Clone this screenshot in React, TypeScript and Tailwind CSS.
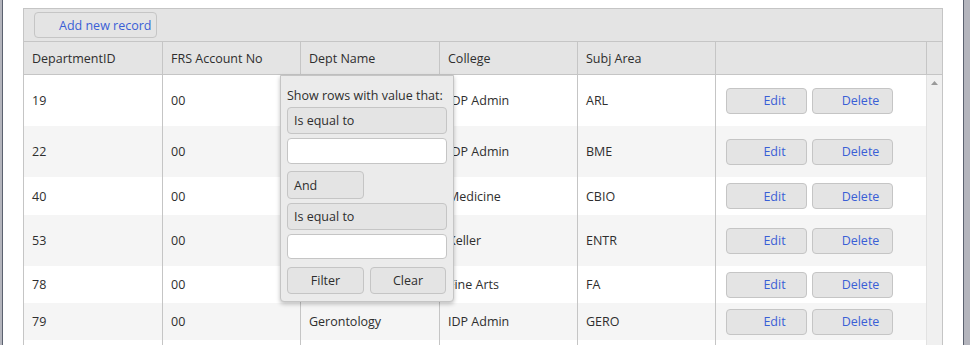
import React from "react"

const cols = [
  { label: "DepartmentID", w: "w-[138px]" },
  { label: "FRS Account No", w: "w-[138px]" },
  { label: "Dept Name", w: "w-[139px]" },
  { label: "College", w: "w-[138px]" },
  { label: "Subj Area", w: "w-[138px]" },
]

// dept names of the first rows sit under the filter menu, so they are left blank
const rows = [
  { id: "19", frs: "00", dept: "", college: "IDP Admin", subj: "ARL", h: "h-[51px]" },
  { id: "22", frs: "00", dept: "", college: "IDP Admin", subj: "BME", h: "h-[51px]" },
  { id: "40", frs: "00", dept: "", college: "Medicine", subj: "CBIO", h: "h-[38px]" },
  { id: "53", frs: "00", dept: "", college: "Keller", subj: "ENTR", h: "h-[51px]" },
  { id: "78", frs: "00", dept: "", college: "Fine Arts", subj: "FA", h: "h-[37px]" },
  { id: "79", frs: "00", dept: "Gerontology", college: "IDP Admin", subj: "GERO", h: "h-[37px]" },
]

function Btn({ label, className }: { label: string; className?: string }) {
  // blank space on the left is where the (missing) icon sits
  return (
    <button
      className={
        "h-[26px] rounded-[4px] border border-[#c5c5c5] bg-[#e4e4e4] pl-[16px] pt-[2px] text-[#3a5fd6] " +
        (className ?? "")
      }
    >
      {label}
    </button>
  )
}

function FilterMenu() {
  return (
    <div className="absolute left-[256px] top-[66px] flex h-[227px] w-[174px] flex-col rounded-b-[4px] border border-[#c5c5c5] bg-[#ebebeb] px-[6px] shadow-[0_2px_4px_rgba(0,0,0,0.25)]">
      <div className="mt-[11px] h-[18px] leading-[18px] text-[#2e2e2e]">Show rows with value that:</div>
      <div className="mt-[2px] flex h-[27px] items-center rounded-[4px] border border-[#c5c5c5] bg-[#e4e4e4] px-[6px] pt-[2px]">
        Is equal to
      </div>
      <div className="mt-[4px] h-[26px] rounded-[4px] border border-[#c5c5c5] bg-white" />
      <div className="mt-[7px] flex h-[28px] w-[77px] items-center rounded-[4px] border border-[#c5c5c5] bg-[#e4e4e4] px-[6px] pt-[2px]">
        And
      </div>
      <div className="mt-[4px] flex h-[27px] items-center rounded-[4px] border border-[#c5c5c5] bg-[#e4e4e4] px-[6px] pt-[2px]">
        Is equal to
      </div>
      <div className="mt-[4px] h-[25px] rounded-[4px] border border-[#c5c5c5] bg-white" />
      <div className="mt-[8px] flex gap-[6px]">
        <button className="h-[27px] w-[77px] rounded-[4px] border border-[#c5c5c5] bg-[#e4e4e4] pt-[2px]">Filter</button>
        <button className="h-[27px] w-[76px] rounded-[4px] border border-[#c5c5c5] bg-[#e4e4e4] pt-[2px]">Clear</button>
      </div>
    </div>
  )
}

export default function App() {
  return (
    <div className="flex h-[345px] w-[970px] overflow-hidden bg-white font-['Open_Sans',sans-serif] text-[12.5px] text-[#2e2e2e]">
      <div className="w-[2px] bg-[#b4b5bd]" />
      <div className="w-[1px] bg-[#5c6270]" />

      <div className="flex-1 pl-[20px] pt-[8px]">
        <div className="relative h-[400px] w-[920px] border border-[#c5c5c5]">
          {/* toolbar */}
          <div className="h-[33px] border-b border-[#c5c5c5] bg-[#e4e4e4] pl-[10px] pt-[3px]">
            <Btn label="Add new record" className="w-[123px] pl-[24px] text-left" />
          </div>

          {/* header */}
          <div className="flex h-[33px] border-b border-[#c5c5c5] bg-[#e4e4e4]">
            {cols.map((c, i) => (
              <div
                key={c.label}
                className={`${c.w} flex items-center pl-[8px] pt-[3px] ${i > 0 ? "border-l border-[#c5c5c5]" : ""}`}
              >
                {c.label}
              </div>
            ))}
            <div className="w-[211px] border-l border-[#c5c5c5]" />
            <div className="w-[16px] border-l border-[#c5c5c5]" />
          </div>

          {/* body */}
          <div className="flex">
            <div className="flex-1">
              {rows.map((r, i) => (
                <div key={r.id} className={`flex ${r.h} ${i % 2 ? "bg-[#f5f5f5]" : "bg-white"}`}>
                  <div className="flex w-[138px] items-center pl-[8px] pt-[2px]">{r.id}</div>
                  <div className="flex w-[138px] items-center border-l border-[#c5c5c5] pl-[8px] pt-[2px]">{r.frs}</div>
                  <div className="flex w-[139px] items-center border-l border-[#c5c5c5] pl-[8px] pt-[2px]">{r.dept}</div>
                  <div className="flex w-[138px] items-center border-l border-[#c5c5c5] pl-[8px] pt-[2px]">{r.college}</div>
                  <div className="flex w-[138px] items-center border-l border-[#c5c5c5] pl-[8px] pt-[2px]">{r.subj}</div>
                  <div className="flex w-[211px] items-center gap-[5px] border-l border-[#c5c5c5] pl-[10px]">
                    <Btn label="Edit" className="w-[81px]" />
                    <Btn label="Delete" className="w-[81px]" />
                  </div>
                </div>
              ))}
              {/* start of the next row, scrolled out of view */}
              <div className="flex h-[40px] bg-white">
                <div className="w-[138px]" />
                <div className="w-[138px] border-l border-[#c5c5c5]" />
                <div className="w-[139px] border-l border-[#c5c5c5]" />
                <div className="w-[138px] border-l border-[#c5c5c5]" />
                <div className="w-[138px] border-l border-[#c5c5c5]" />
                <div className="w-[211px] border-l border-[#c5c5c5]" />
              </div>
            </div>
            <div className="flex h-[300px] w-[16px] justify-center border-l border-[#e2e2e2] bg-[#f0f0f0] pt-[6px]">
              <svg width="7" height="4" viewBox="0 0 7 4">
                <path d="M0 4 L3.5 0 L7 4 Z" fill="#9a9a9a" />
              </svg>
            </div>
          </div>

          <FilterMenu />
        </div>
      </div>

      <div className="w-[1px] bg-[#5c6270]" />
      <div className="w-[6px] bg-[#b4b5bd]" />
    </div>
  )
}
